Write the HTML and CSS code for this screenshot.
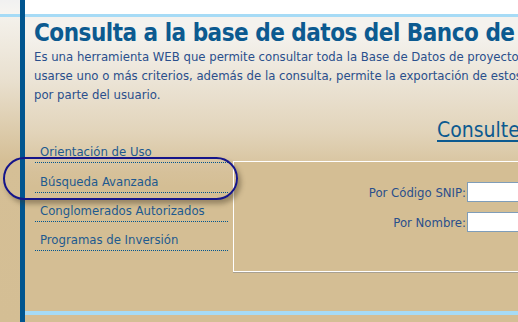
FILE: index.html
```html
<!DOCTYPE html>
<html lang="es">
<head>
  <meta charset="UTF-8" />
  <title>Banco de Proyectos - Consulta</title>
  <link rel="stylesheet" href="styles.css">
</head>
<body>
  <div class="frame">
    <div class="top-white"></div>
    <div class="content">
      <h1>Consulta a la base de datos del Banco de Proyectos</h1>
      <p class="intro">Es una herramienta WEB que permite consultar toda la Base de Datos de proyectos<br>
        usarse uno o más criterios, además de la consulta, permite la exportación de estos<br>
        por parte del usuario.</p>

      <div class="main">
        <ul class="menu">
          <li><a href="#">Orientación de Uso</a></li>
          <li><a href="#">Búsqueda Avanzada</a></li>
          <li><a href="#">Conglomerados Autorizados</a></li>
          <li><a href="#">Programas de Inversión</a></li>
        </ul>

        <div class="search">
          <h2><a href="#">Consulte el Banco de Proyectos</a></h2>
          <div class="panel">
            <div class="row">
              <label for="snip">Por Código SNIP:</label>
              <input type="text" id="snip">
            </div>
            <div class="row">
              <label for="nombre">Por Nombre:</label>
              <input type="text" id="nombre">
            </div>
          </div>
        </div>
      </div>
    </div>
    <div class="bottom-bar"></div>
  </div>

  <!-- highlight annotation -->
  <div class="highlight"></div>
</body>
</html>
```

FILE: styles.css
```css
:root {
  --blue-dark: #00558f;
  --blue-light: #a6dbf6;
  --tan: #d4be94;
  --title: #0c5a90;
  --text: #2a4f8c;
  --link: #1d5a8f;
}

html, body {
  height: 100%;
}

body {
  margin: 0;
  overflow: hidden;
  font-family: 'DejaVu Sans Condensed', 'DejaVu Sans', sans-serif;
  background:
    linear-gradient(var(--blue-light), var(--blue-light)) 0 14px / 100% 3px no-repeat,
    linear-gradient(#f1f1f1 0, #f7f5f1 14px, #f4f1eb 17px, #e9e0cf 80px, #d5bf96 160px, var(--tan) 322px);
  position: relative;
}

.frame {
  margin-left: 20px;
  border-left: 5px solid var(--blue-dark);
  height: 322px;
  width: 800px;
  background: linear-gradient(#f4f2ee 17px, #ece5d8 60px, #e2d4ba 115px, #d6c19a 155px, var(--tan) 170px) 0 17px / 100% 100% no-repeat;
}

.top-white {
  height: 14px;
  background: #fff;
  border-bottom: 3px solid var(--blue-light);
}

.content {
  height: 294px;
}

h1 {
  margin: 0;
  padding: 2px 0 0 9px;
  font-size: 24px;
  line-height: 28px;
  color: var(--title);
  white-space: nowrap;
  letter-spacing: -0.5px;
}

.intro {
  margin: 0;
  padding: 0 0 0 9px;
  font-size: 13px;
  line-height: 19px;
  color: var(--text);
  white-space: nowrap;
}

.main {
  display: flex;
  gap: 5px;
  margin-top: 12px;
}

.menu {
  list-style: none;
  margin: 18px 0 0 10px;
  padding: 0;
  width: 193px;
}

.menu li {
  height: 28.33px;
  border-bottom: 1px dotted var(--blue-dark);
  display: flex;
  align-items: flex-end;
}

.menu a {
  padding: 0 0 2px 5px;
  font-size: 13px;
  line-height: 16px;
  color: var(--link);
  text-decoration: none;
}

.search {
  width: 500px;
}

.search h2 {
  margin: 0;
  padding-left: 204px;
  height: 45px;
  font-size: 21px;
  font-weight: normal;
  line-height: 28px;
  white-space: nowrap;
}

.search h2 a {
  color: var(--title);
  text-decoration: underline;
  text-underline-offset: 3px;
}

.panel {
  height: 111px;
  background: var(--tan);
  border-top: 1px solid #fff;
  border-left: 1px solid #fff;
  border-bottom: 1px solid #fff;
  box-shadow: 0 1px 0 #a8a090;
  padding-top: 20px;
  box-sizing: border-box;
}

.row {
  display: grid;
  grid-template-columns: 233px 150px;
  align-items: center;
  margin-bottom: 10px;
}

.row label {
  text-align: right;
  font-size: 13px;
  color: var(--text);
  padding-right: 1px;
}

.row input {
  height: 20px;
  box-sizing: border-box;
  border: 1px solid #7f9db9;
  background: #fff;
  margin: 0;
  padding: 0 2px;
}

.bottom-bar {
  height: 4px;
  background: var(--blue-light);
}

.highlight {
  position: absolute;
  left: 3px;
  top: 157px;
  width: 231px;
  height: 39px;
  border: 2px solid #15158a;
  border-radius: 22px;
  box-shadow: 3px 4px 5px rgba(60, 50, 30, 0.4);
}
```
